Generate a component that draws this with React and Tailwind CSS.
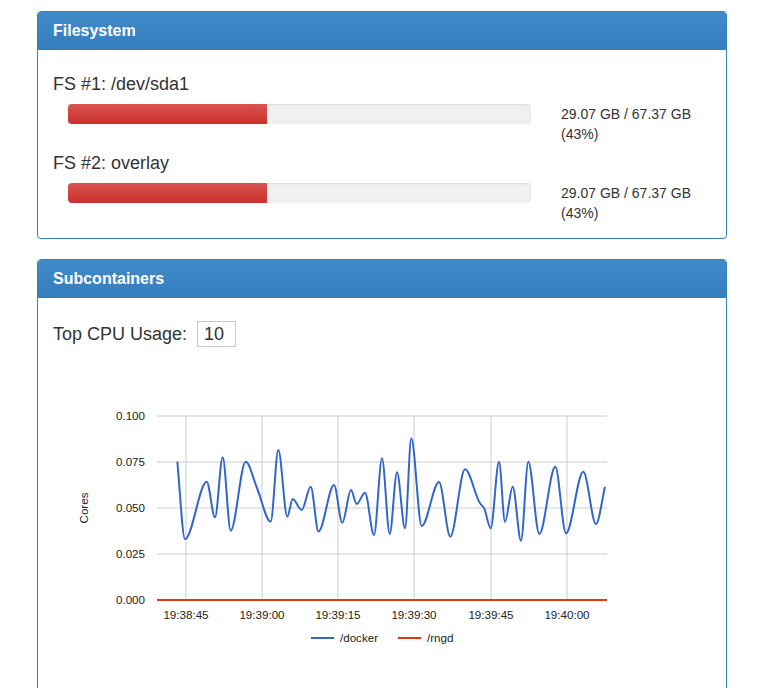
import React from "react";

// blue series, read off the reference in page coordinates
const dockerPts = [
  [177.3, 461.7], [185, 539.3], [206.7, 481.7], [215, 517.3], [222.7, 457.3],
  [230.7, 530.7], [245.7, 461.7], [257, 488], [270.7, 521.7], [278.3, 450],
  [287.3, 516.7], [292.7, 499], [301.7, 510], [310.7, 486.7], [318.5, 531.5],
  [334, 485], [342.3, 522.7], [351, 490], [356.7, 504], [365, 492.7],
  [374, 535], [382, 458.3], [389.7, 534], [397, 472.3], [405, 528.3],
  [411.3, 438.3], [421.7, 526], [439, 482], [450.3, 536.7], [465, 469.3],
  [480, 503.3], [484, 508], [490.7, 528.3], [499, 461.7], [505, 521.7],
  [512.7, 486.7], [521, 540.7], [528.3, 461.7], [539.3, 534], [555.3, 466.7],
  [566, 533.3], [583.3, 471.7], [596, 524], [605, 486.7],
];

const smoothPath = (pts) => {
  const n = pts.length;
  const m = [];
  for (let i = 0; i < n - 1; i++) {
    m.push((pts[i + 1][1] - pts[i][1]) / (pts[i + 1][0] - pts[i][0]));
  }
  const t = pts.map((_, i) => {
    if (i === 0) return m[0];
    if (i === n - 1) return m[n - 2];
    if (m[i - 1] * m[i] <= 0) return 0;
    const h0 = pts[i][0] - pts[i - 1][0];
    const h1 = pts[i + 1][0] - pts[i][0];
    return (3 * (h0 + h1)) / ((2 * h1 + h0) / m[i - 1] + (h1 + 2 * h0) / m[i]);
  });
  let d = `M${pts[0][0]},${pts[0][1]}`;
  for (let i = 0; i < n - 1; i++) {
    const [x0, y0] = pts[i];
    const [x1, y1] = pts[i + 1];
    const dx = (x1 - x0) / 3;
    d += ` C${x0 + dx},${y0 + t[i] * dx} ${x1 - dx},${y1 - t[i + 1] * dx} ${x1},${y1}`;
  }
  return d;
};

const yTicks = [
  { y: 416, label: "0.100" },
  { y: 462, label: "0.075" },
  { y: 508, label: "0.050" },
  { y: 554, label: "0.025" },
  { y: 600, label: "0.000" },
];

const xTicks = [
  { x: 186, label: "19:38:45" },
  { x: 262, label: "19:39:00" },
  { x: 338, label: "19:39:15" },
  { x: 414, label: "19:39:30" },
  { x: 491, label: "19:39:45" },
  { x: 567, label: "19:40:00" },
];

const Panel = ({ title, className = "", children }) => (
  <div className={`border border-[#357ebd] rounded-[4px] bg-white ${className}`}>
    <div className="bg-linear-to-b from-[#428bca] to-[#357ebd] px-[15px] py-[10px] border-b border-[#357ebd] rounded-t-[3px]">
      <h3 className="text-[16px] leading-[17px] font-bold text-white">{title}</h3>
    </div>
    <div className="p-[15px]">{children}</div>
  </div>
);

const FsUsage = ({ name }) => (
  <div>
    <h4 className="mt-[10px] mb-[10px] text-[18px] leading-[19px] font-medium">{name}</h4>
    <div className="flex items-start">
      <div className="ml-[15px] w-[463px] h-[20px] rounded-[4px] bg-[#f0f0f0] overflow-hidden shadow-[inset_0_1px_2px_rgba(0,0,0,0.1)]">
        <div className="h-full w-[43%] bg-linear-to-b from-[#d9534f] to-[#c9302c]" />
      </div>
      <div className="ml-[30px] w-[135px]">29.07 GB / 67.37 GB (43%)</div>
    </div>
  </div>
);

const CpuChart = () => (
  <svg width="658" height="340" viewBox="53 353 658 340" fontFamily="'Liberation Sans', Arial, sans-serif" fontSize="11.6">
    {yTicks.map((t) => (
      <line key={t.label} x1="157" x2="607" y1={t.y} y2={t.y} stroke="#cccccc" strokeWidth="1" />
    ))}
    {xTicks.map((t) => (
      <line key={t.label} x1={t.x} x2={t.x} y1="416" y2="600" stroke="#cccccc" strokeWidth="1" />
    ))}
    {yTicks.map((t) => (
      <text key={t.label} x="145" y={t.y + 4} textAnchor="end" fill="#222">{t.label}</text>
    ))}
    {xTicks.map((t) => (
      <text key={t.label} x={t.x} y="619" textAnchor="middle" fill="#222">{t.label}</text>
    ))}
    <text x="88" y="508" textAnchor="middle" fill="#222" transform="rotate(-90 88 508)">Cores</text>
    <path d={smoothPath(dockerPts)} fill="none" stroke="#3366cc" strokeWidth="2" strokeLinejoin="round" />
    <line x1="157" x2="607" y1="600" y2="600" stroke="#dc3912" strokeWidth="2" />
    <line x1="311" x2="334" y1="638" y2="638" stroke="#3366cc" strokeWidth="2" />
    <text x="340" y="642" fill="#222">/docker</text>
    <line x1="398" x2="421" y1="638" y2="638" stroke="#dc3912" strokeWidth="2" />
    <text x="427" y="642" fill="#222">/rngd</text>
  </svg>
);

const App = () => {
  return (
    <div className="min-h-screen bg-white pt-[11px] pl-[37px] font-['Liberation_Sans',Arial,sans-serif] text-[14px] leading-[20px] text-[#333]">
      <div className="w-[690px]">
        <Panel title="Filesystem">
          <FsUsage name="FS #1: /dev/sda1" />
          <FsUsage name="FS #2: overlay" />
        </Panel>

        <Panel title="Subcontainers" className="mt-[20px]">
          <h4 className="mt-[8px] mb-[6px] flex items-center h-[26px] text-[18px] font-medium">
            <span>Top CPU Usage:</span>
            <input
              type="text"
              defaultValue="10"
              className="ml-[10px] w-[39px] h-[26px] border border-[#c8c8c8] px-[6px] text-[18px] text-[#333] outline-none"
            />
          </h4>
          <CpuChart />
        </Panel>
      </div>
    </div>
  );
};

export default App;
